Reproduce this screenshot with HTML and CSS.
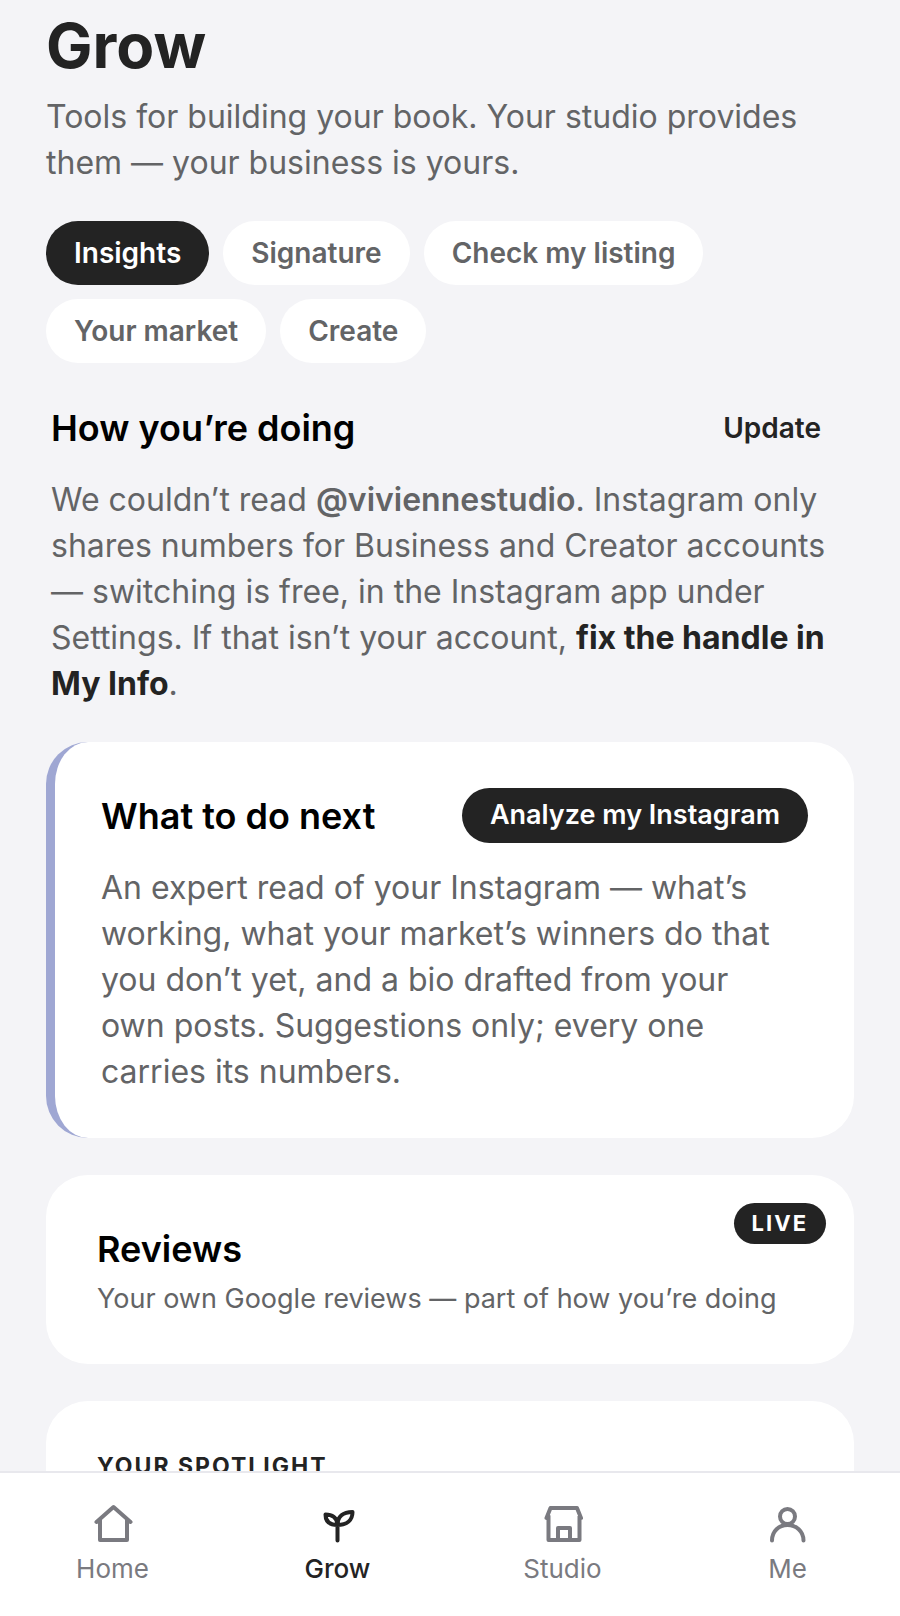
FILE: index.html
```html
<!DOCTYPE html>
<html lang="en">
<head>
    <meta charset="UTF-8">
    <meta name="viewport" content="width=device-width, initial-scale=1.0">
    <title>Grow</title>
    <link rel="stylesheet" href="styles.css">
</head>
<body>
    <main class="page">
        <header class="page-header">
            <h1>Grow</h1>
            <p>Tools for building your book. Your studio provides them — your business is yours.</p>
        </header>

        <!-- Section tabs -->
        <div class="pills">
            <button type="button" class="pill active">Insights</button>
            <button type="button" class="pill">Signature</button>
            <button type="button" class="pill">Check my listing</button>
            <button type="button" class="pill">Your market</button>
            <button type="button" class="pill">Create</button>
        </div>

        <section class="status">
            <div class="section-head">
                <h2>How you’re doing</h2>
                <button type="button" class="text-btn">Update</button>
            </div>
            <p>We couldn’t read <strong>@viviennestudio</strong>. Instagram only shares numbers for Business and Creator accounts — switching is free, in the Instagram app under Settings. If that isn’t your account, <a href="#my-info">fix the handle in My Info</a>.</p>
        </section>

        <section class="card card-accent">
            <div class="section-head">
                <h2>What to do next</h2>
                <button type="button" class="dark-btn">Analyze my Instagram</button>
            </div>
            <p>An expert read of your Instagram — what’s working, what your market’s winners do that you don’t yet, and a bio drafted from your own posts. Suggestions only; every one carries its numbers.</p>
        </section>

        <section class="card card-reviews">
            <span class="badge">LIVE</span>
            <h2>Reviews</h2>
            <p>Your own Google reviews — part of how you’re doing</p>
        </section>

        <section class="card">
            <h3 class="eyebrow">YOUR SPOTLIGHT</h3>
        </section>
    </main>

    <!-- Bottom navigation -->
    <nav class="tab-bar">
        <a href="#home" class="tab">
            <svg viewBox="0 0 40 40" aria-hidden="true">
                <path d="M3.500 19 20.500 4 37.500 19M7 17V37H34V17"/>
            </svg>
            <span>Home</span>
        </a>
        <a href="#grow" class="tab active">
            <svg viewBox="0 0 40 40" aria-hidden="true">
                <path d="M19.500 37.500V22M19.500 21.500C19 14.500 14 11.500 7.500 11.500C7.500 18 11 22 19.500 22ZM19.500 22C19.500 13.500 25 9 34.500 9C34.500 17 29 22 19.500 22Z"/>
            </svg>
            <span>Grow</span>
        </a>
        <a href="#studio" class="tab">
            <svg viewBox="0 0 40 40" aria-hidden="true">
                <path d="M3.500 15 7.500 5H34L38 15M5.500 13V37H36.500V13M15 37V25H27V37"/>
            </svg>
            <span>Studio</span>
        </a>
        <a href="#me" class="tab">
            <svg viewBox="0 0 40 40" aria-hidden="true">
                <circle cx="19.500" cy="13.500" r="7.500"/>
                <path d="M4 37.500C4 28 11 22 19.500 22S35.500 28 35.500 37.500"/>
            </svg>
            <span>Me</span>
        </a>
    </nav>
</body>
</html>
```
FILE: styles.css
```css
* {
    margin: 0;
    padding: 0;
    box-sizing: border-box;
}

body {
    display: flex;
    flex-direction: column;
    height: 100vh;
    background: #f4f4f7;
    color: #636466;
    font-family: 'Inter', sans-serif;
    font-size: 32px;
    line-height: 46px;
}

button {
    border: none;
    background: none;
    font-family: inherit;
    font-size: 28px;
    line-height: 36px;
    font-weight: 600;
    cursor: pointer;
}

.page {
    flex: 1;
    min-height: 0;
    overflow-y: auto;
    scrollbar-width: none;
    padding: 10px 46px 0;
}

.page-header {
    margin-bottom: 35px;
}

h1 {
    color: #232323;
    font-size: 62px;
    line-height: 72px;
    font-weight: 700;
    margin-bottom: 12px;
}

h2 {
    color: #000;
    font-size: 36px;
    line-height: 46px;
    font-weight: 600;
}

/* Pills */
.pills {
    display: flex;
    flex-wrap: wrap;
    gap: 14px;
    margin-bottom: 37px;
}

.pill {
    padding: 14px 28px;
    border-radius: 32px;
    background: #fff;
    color: #636466;
}

.pill.active {
    background: #232323;
    color: #fff;
}

/* Status */
.status {
    padding: 0 5px;
    margin-bottom: 35px;
}

.section-head {
    display: flex;
    justify-content: space-between;
    align-items: center;
    min-height: 55px;
    margin-bottom: 22px;
}

.text-btn {
    padding: 0 28px;
    color: #232323;
}

.status strong {
    font-weight: 600;
}

.status a {
    color: #232323;
    font-weight: 700;
    text-decoration: none;
}

.dark-btn {
    padding: 9px 28px 10px;
    border-radius: 28px;
    background: #232323;
    color: #fff;
    font-size: 27px;
}

/* Cards */
.card {
    position: relative;
    padding: 51px;
    margin-bottom: 37px;
    border-radius: 42px;
    background: #fff;
}

.card-accent {
    padding: 46px 46px 43px;
    border-left: 9px solid #9fa7d3;
}

.card-accent p {
    padding-right: 16px;
}

.card-reviews {
    padding-bottom: 47px;
}

.card-reviews p {
    margin-top: 9px;
    font-size: 27px;
    line-height: 36px;
}

.badge {
    position: absolute;
    top: 28px;
    right: 28px;
    padding: 0 18px;
    border-radius: 21px;
    background: #232323;
    color: #fff;
    font-size: 22px;
    line-height: 41px;
    font-weight: 700;
    letter-spacing: 2px;
}

.eyebrow {
    color: #232323;
    font-size: 23px;
    line-height: 28px;
    font-weight: 700;
    letter-spacing: 2px;
}

/* Bottom navigation */
.tab-bar {
    display: grid;
    grid-template-columns: repeat(4, 1fr);
    padding: 30px 0 31px;
    border-top: 2px solid #e8e8ed;
    background: #fff;
}

.tab {
    display: flex;
    flex-direction: column;
    align-items: center;
    gap: 10px;
    color: #7a7a80;
    font-size: 26px;
    line-height: 32px;
    text-decoration: none;
}

.tab.active {
    color: #232323;
    font-weight: 500;
}

.tab svg {
    width: 40px;
    height: 40px;
    fill: none;
    stroke: currentColor;
    stroke-width: 4;
    stroke-linecap: round;
    stroke-linejoin: round;
}
```
